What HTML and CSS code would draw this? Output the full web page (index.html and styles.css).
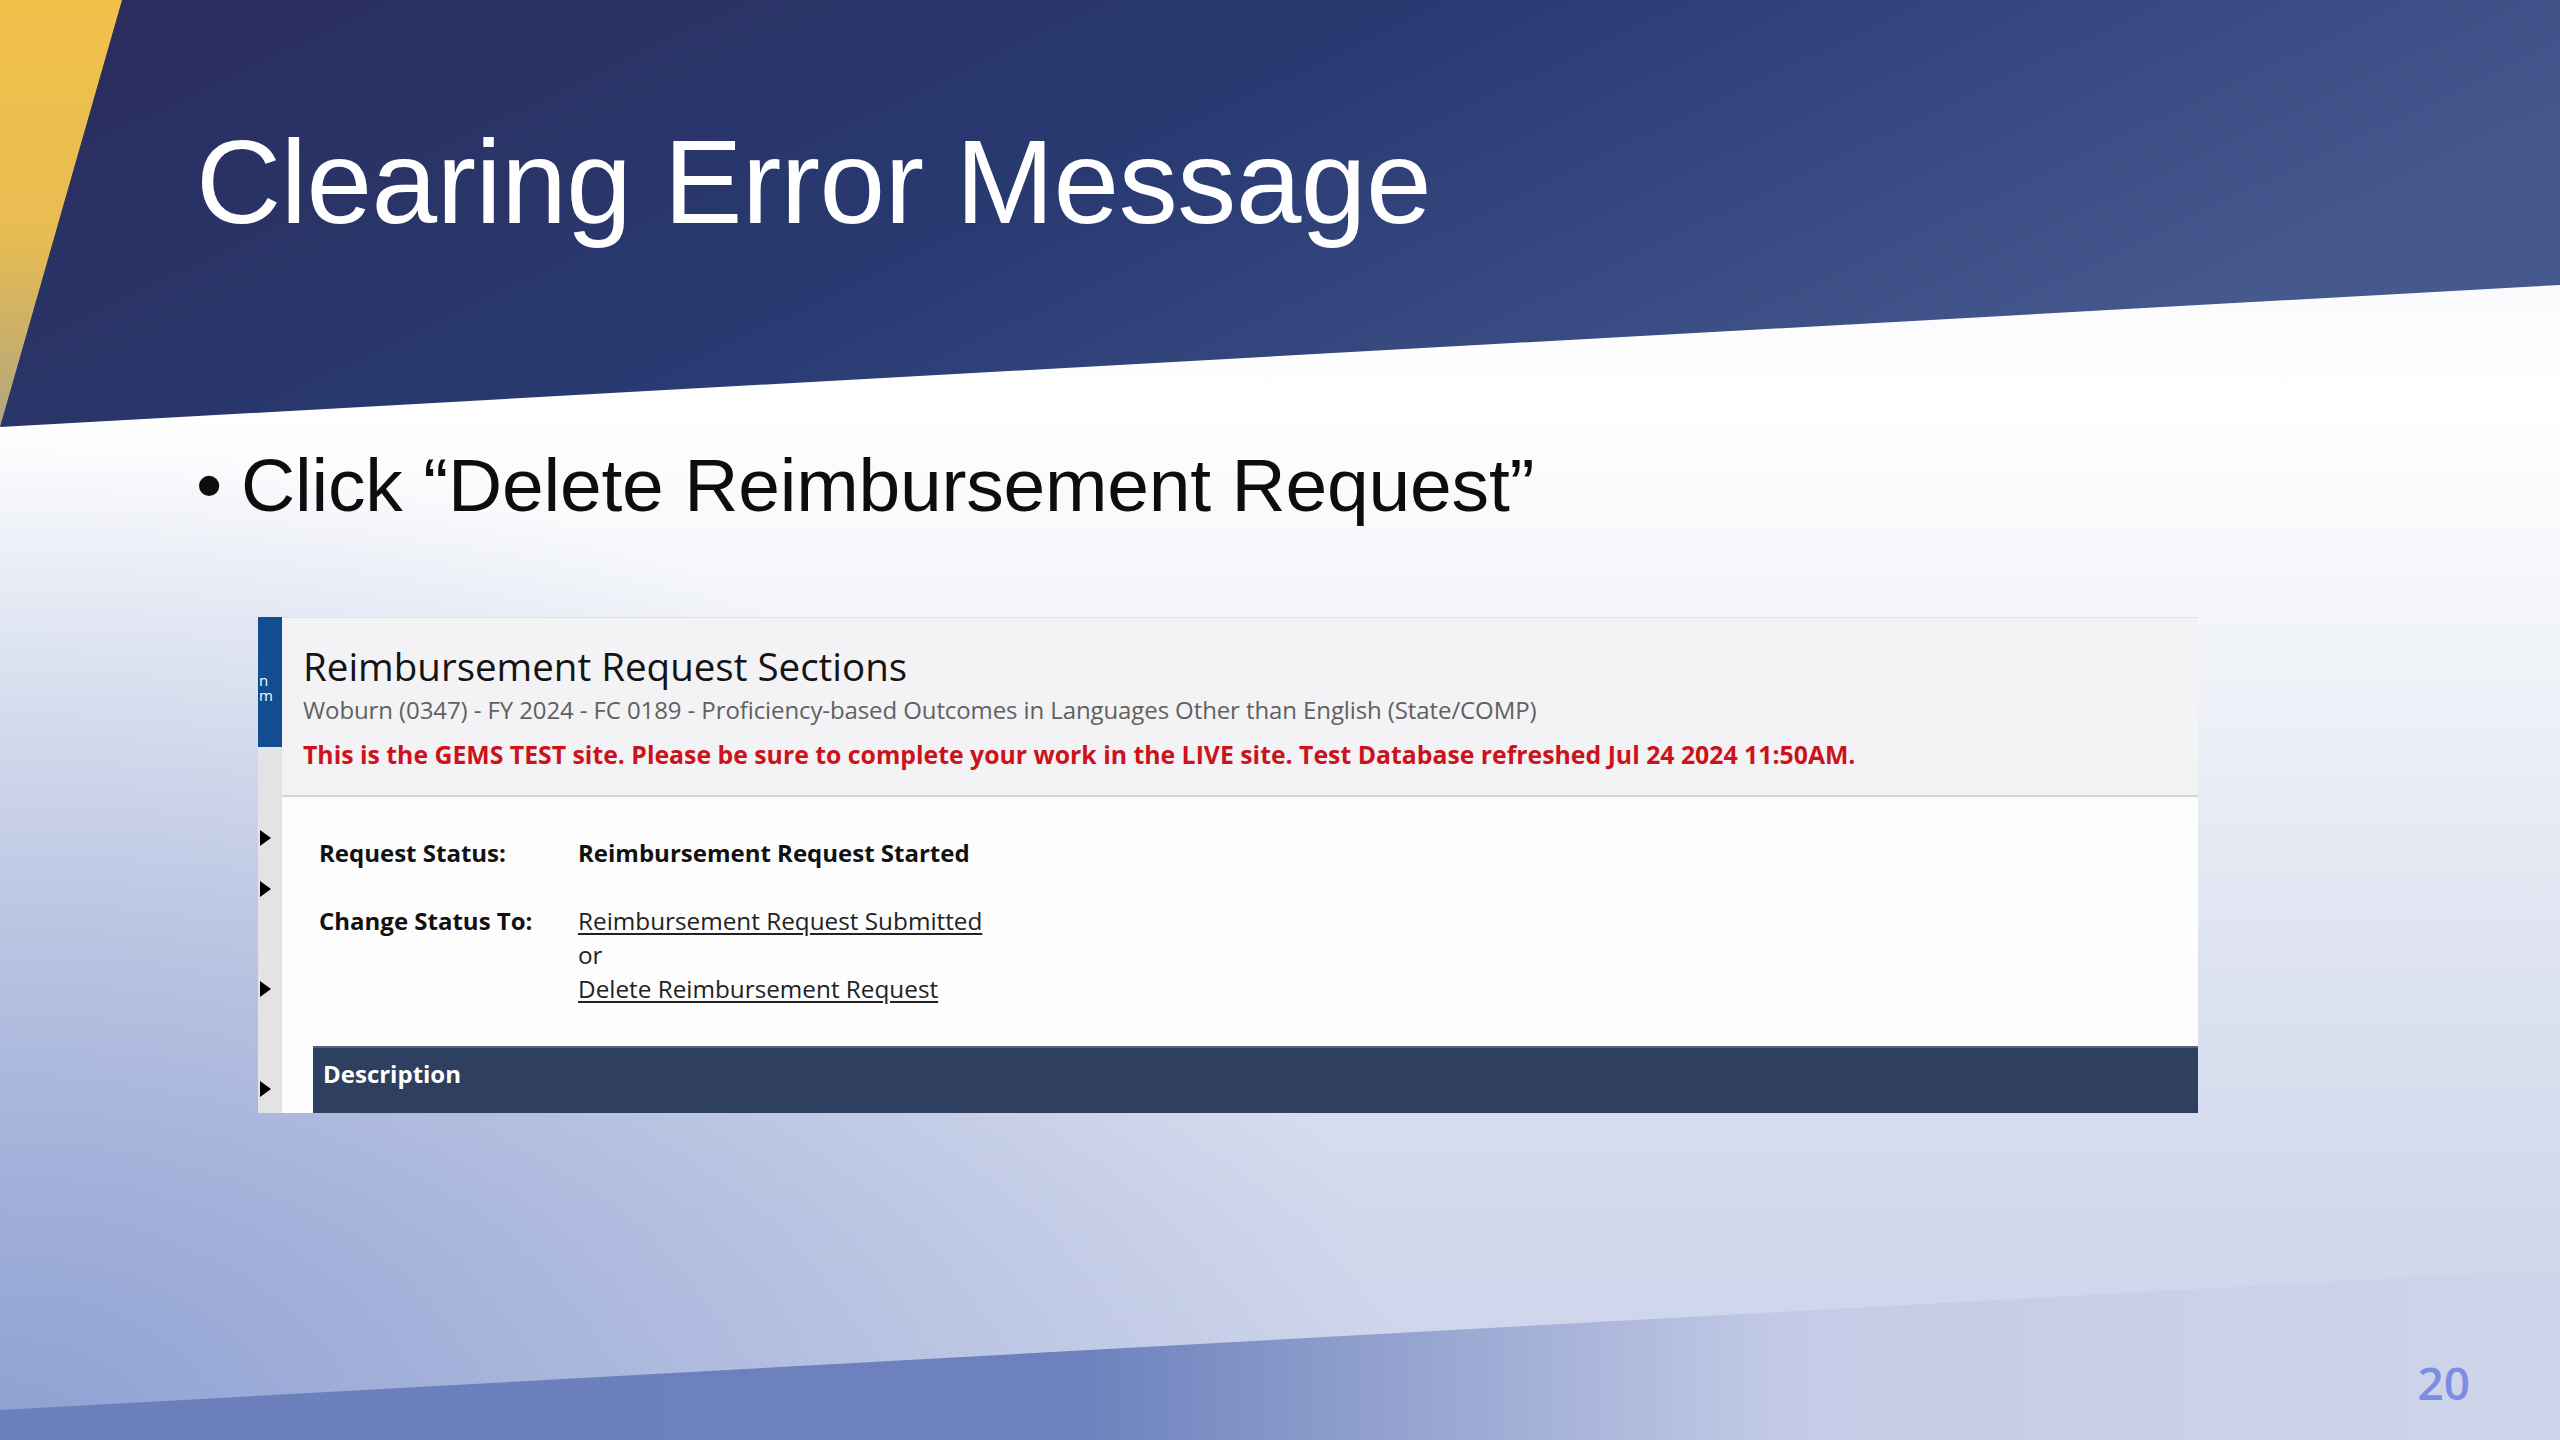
FILE: index.html
```html
<!DOCTYPE html>
<html lang="en">
<head>
<meta charset="utf-8">
<title>Clearing Error Message</title>
<link rel="stylesheet" href="styles.css">
</head>
<body>
<div class="slide">
  <svg class="bg" viewBox="0 0 2560 1440" preserveAspectRatio="none" aria-hidden="true">
    <defs>
      <linearGradient id="navy" x1="0" y1="0" x2="1" y2="0.35">
        <stop offset="0" stop-color="#2b2c5b"/>
        <stop offset="0.5" stop-color="#283a71"/>
        <stop offset="1" stop-color="#46598f"/>
      </linearGradient>
      <linearGradient id="gold" x1="0" y1="0" x2="0" y2="1">
        <stop offset="0" stop-color="#f1c14a"/>
        <stop offset="0.55" stop-color="#e7bc51"/>
        <stop offset="1" stop-color="#b2a57f"/>
      </linearGradient>
      <linearGradient id="foot" x1="0" y1="0" x2="1" y2="0">
        <stop offset="0" stop-color="#6a7fbc"/>
        <stop offset="0.42" stop-color="#6c81bd"/>
        <stop offset="0.7" stop-color="#c3cbe6"/>
        <stop offset="1" stop-color="#cfd5ea"/>
      </linearGradient>
    </defs>
    <polygon points="0,0 2560,0 2560,285 0,427" fill="url(#navy)"/>
    <polygon points="0,0 122,0 0,427" fill="url(#gold)"/>
    <polygon points="0,1410 2560,1269 2560,1440 0,1440" fill="url(#foot)"/>
  </svg>

  <div class="content">
    <h1 class="title">Clearing Error Message</h1>
    <div class="bullet"><span class="dot">•</span><span>Click “Delete Reimbursement Request”</span></div>

    <div class="panel">
      <div class="rail">
        <div class="rail-blue"><span>n</span><span>m</span></div>
        <div class="rail-grey">
          <span class="tri t1"></span>
          <span class="tri t2"></span>
          <span class="tri t3"></span>
          <span class="tri t4"></span>
        </div>
      </div>
      <div class="main">
        <div class="header">
          <div class="h-title">Reimbursement Request Sections</div>
          <div class="h-sub">Woburn (0347) - FY 2024 - FC 0189 - Proficiency-based Outcomes in Languages Other than English (State/COMP)</div>
          <div class="h-warn">This is the GEMS TEST site. Please be sure to complete your work in the LIVE site. Test Database refreshed Jul 24 2024 11:50AM.</div>
        </div>
        <div class="body">
          <div class="row">
            <div class="label">Request Status:</div>
            <div class="value">Reimbursement Request Started</div>
          </div>
          <div class="row">
            <div class="label">Change Status To:</div>
            <div class="links">
              <a href="#">Reimbursement Request Submitted</a>
              <span class="or">or</span>
              <a href="#">Delete Reimbursement Request</a>
            </div>
          </div>
          <div class="desc">Description</div>
        </div>
      </div>
    </div>
  </div>

  <div class="page-num">20</div>
</div>
</body>
</html>
```

FILE: styles.css
```css
html, body {
  margin: 0;
  padding: 0;
}

.slide {
  position: relative;
  width: 2560px;
  height: 1440px;
  overflow: hidden;
  font-family: "Liberation Sans", Arial, sans-serif;
  background:
    radial-gradient(ellipse 1400px 1000px at 0% 100%, rgba(132, 152, 206, 0.85) 0%, rgba(132, 152, 206, 0) 100%),
    linear-gradient(180deg, #eef0f5 0%, #ffffff 28%, #eef1f7 48%, #dde2f0 68%, #d2d8ec 85%, #ccd3ea 100%);
}

.bg {
  position: absolute;
  left: 0;
  top: 0;
  width: 100%;
  height: 100%;
  z-index: 0;
}

.content {
  position: relative;
  z-index: 1;
  padding: 122px 0 0 196px;
}

.title {
  margin: 0;
  font-weight: 400;
  font-size: 118px;
  line-height: 120px;
  color: #ffffff;
  letter-spacing: -0.5px;
}

.bullet {
  margin-top: 206px;
  display: flex;
  gap: 19px;
  font-size: 75px;
  line-height: 75px;
  color: #0d0d0d;
  letter-spacing: -0.2px;
}

.panel {
  margin: 94px 0 0 62px;
  width: 1940px;
  display: flex;
  background: #fdfdfd;
  font-family: "Open Sans", "Noto Sans", sans-serif;
}

.rail {
  width: 24px;
  flex: none;
  display: flex;
  flex-direction: column;
  background: #e3e3e6;
}

.rail-blue {
  height: 130px;
  box-sizing: border-box;
  background: #124c91;
  color: #ffffff;
  font-size: 15px;
  line-height: 15px;
  padding: 56px 0 0 1px;
  display: flex;
  flex-direction: column;
  overflow: hidden;
}

.rail-grey {
  display: flex;
  flex-direction: column;
  padding-left: 2px;
}

.tri {
  width: 0;
  height: 0;
  border-left: 11px solid #000000;
  border-top: 8px solid transparent;
  border-bottom: 8px solid transparent;
}

.t1 { margin-top: 83px; }
.t2 { margin-top: 35px; }
.t3 { margin-top: 84px; }
.t4 { margin-top: 84px; }

.main {
  flex: 1;
  display: flex;
  flex-direction: column;
}

.header {
  height: 180px;
  box-sizing: border-box;
  background: #f3f2f5;
  border-top: 1px solid #e2e2e5;
  border-bottom: 2px solid #d4d4d8;
  padding: 26px 0 0 21px;
}

.h-title {
  font-size: 38.5px;
  line-height: 44px;
  color: #141414;
}

.h-sub {
  font-size: 24px;
  line-height: 44px;
  color: #616161;
  letter-spacing: -0.1px;
}

.h-warn {
  font-size: 24.8px;
  line-height: 44px;
  font-weight: 700;
  color: #cc121b;
}

.body {
  padding-top: 39px;
  background: #fdfdfd;
  display: flex;
  flex-direction: column;
}

.row {
  display: flex;
  padding-left: 37px;
  font-size: 24px;
  line-height: 34px;
  color: #111111;
}

.row + .row {
  margin-top: 34px;
}

.label {
  width: 259px;
  flex: none;
  font-weight: 700;
}

.value {
  font-weight: 700;
}

.links {
  display: flex;
  flex-direction: column;
  font-size: 24.3px;
}

.links a {
  color: #222222;
  text-decoration: underline;
  text-underline-offset: 3px;
}

.or {
  color: #222222;
}

.desc {
  margin: 40px 0 0 31px;
  height: 67px;
  box-sizing: border-box;
  background: #2f3f60;
  border-top: 2px solid #56637f;
  color: #ffffff;
  font-size: 24px;
  line-height: 34px;
  font-weight: 700;
  padding: 9px 0 0 10px;
}

.page-num {
  position: absolute;
  right: 90px;
  bottom: 28px;
  z-index: 1;
  font-family: "Open Sans", "Noto Sans", sans-serif;
  font-weight: 600;
  font-size: 46px;
  line-height: 60px;
  color: #7b8de0;
}
```
